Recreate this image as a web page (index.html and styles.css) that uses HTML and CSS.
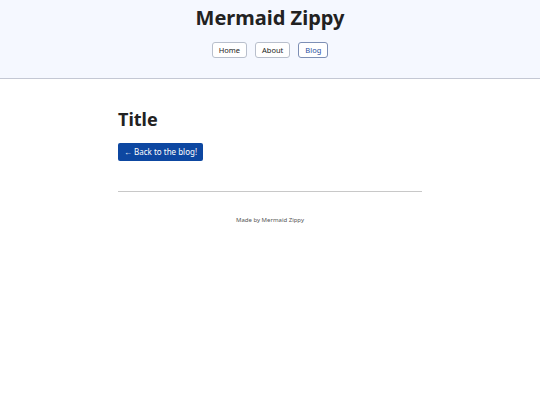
FILE: index.html
```html
<!DOCTYPE html>
<html>
<head>
<meta charset="utf-8">
<link rel="stylesheet" href="styles.css">
</head>
<body>
<header class="site-header">
  <h1 class="site-title">Mermaid Zippy</h1>
  <nav class="nav">
    <a class="nav-btn" href="#">Home</a>
    <a class="nav-btn" href="#">About</a>
    <a class="nav-btn active" href="#">Blog</a>
  </nav>
</header>
<main class="content">
  <h2 class="post-title">Title</h2>
  <a class="back-btn" href="#">← Back to the blog!</a>
  <hr class="divider">
  <footer class="footer">Made by Mermaid Zippy</footer>
</main>
</body>
</html>
```
FILE: styles.css
```css
* { box-sizing: border-box; }
html, body { margin: 0; padding: 0; background: #fff; }
body { font-family: "Noto Sans", "Open Sans", sans-serif; color: #222; }
.site-header {
  background: #f5f8ff;
  border-bottom: 1px solid #c4c8d4;
  height: 79px;
  display: flex;
  flex-direction: column;
  align-items: center;
  padding-top: 4px;
}
.site-title {
  margin: 0;
  font-size: 20px;
  font-weight: 700;
  line-height: 28px;
  color: #222;
}
.nav { display: flex; gap: 8px; margin-top: 10px; }
.nav-btn {
  display: block;
  height: 16px;
  padding: 0 6px;
  border: 1px solid #b8bfcc;
  border-radius: 3px;
  background: #fff;
  font-size: 7.5px;
  line-height: 14px;
  color: #222;
  text-decoration: none;
}
.nav-btn.active { color: #2a4fa0; border-color: #7d8fb5; }
.content { width: 304px; margin: 0 auto; padding-top: 29px; }
.post-title { margin: 0; font-size: 18px; font-weight: 700; line-height: 22px; color: #222; }
.back-btn {
  display: inline-block;
  margin-top: 13px;
  height: 18px;
  padding: 0 6px;
  background: #0d47a1;
  color: #fff;
  border-radius: 2px;
  font-size: 8px;
  line-height: 18px;
  text-decoration: none;
}
.divider { margin: 30px 0 0; border: 0; border-top: 1px solid #c8c8c8; }
.footer { text-align: center; font-size: 6px; color: #555; margin-top: 24px; }
```
